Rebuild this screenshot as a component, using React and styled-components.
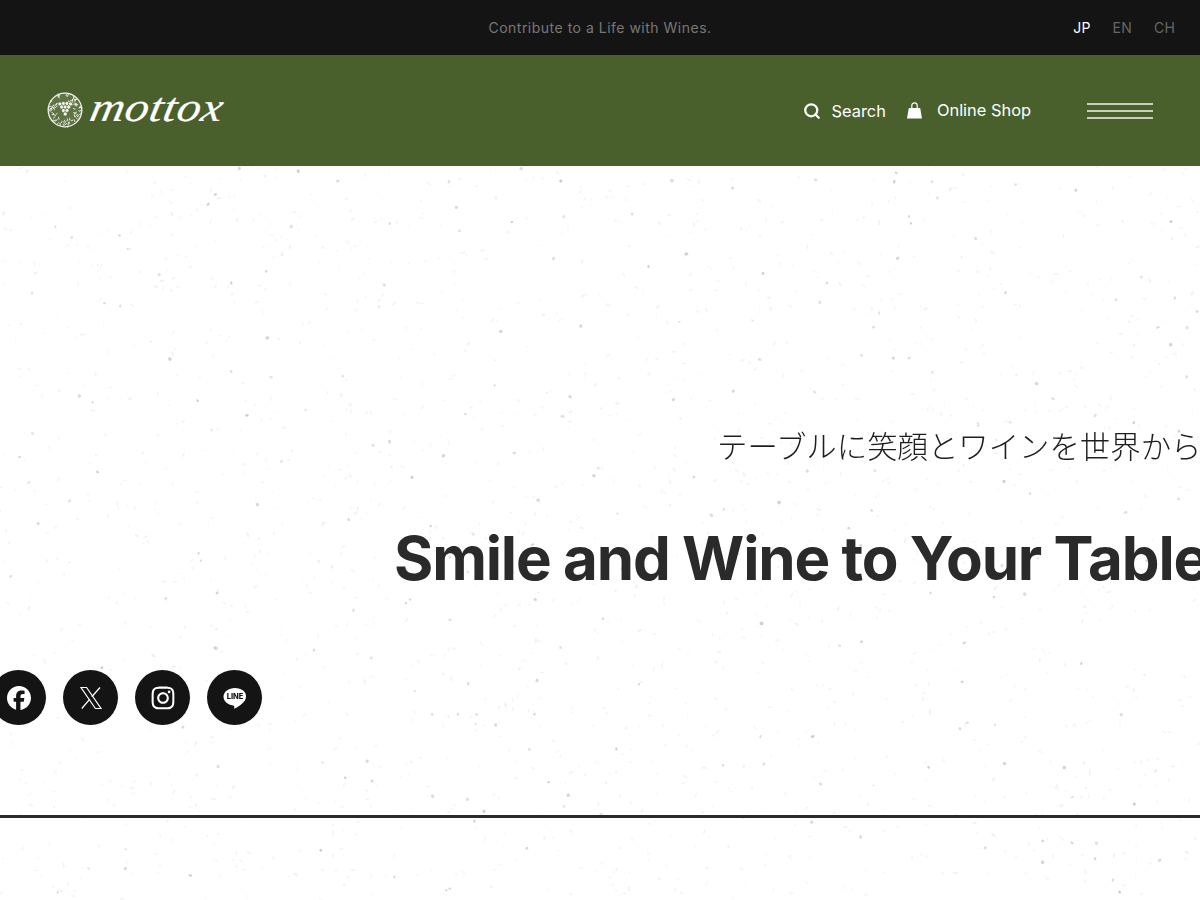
import React from 'react';
import styled, { createGlobalStyle } from 'styled-components';
import { Search } from 'lucide-react';
import { FaFacebook, FaInstagram } from 'react-icons/fa6';

const GlobalStyle = createGlobalStyle`
  html, body {
    margin: 0;
    padding: 0;
    height: 900px;
    overflow: hidden;
    background: #fff;
    font-family: Inter, "Noto Sans CJK JP", sans-serif;
  }
`;

const Page = styled.div`
  position: relative;
  width: 1200px;
  height: 900px;
  overflow: hidden;
`;

const TopBar = styled.div`
  height: 55px;
  background: #141414;
  display: grid;
  grid-template-columns: 1fr auto 1fr;
  align-items: center;
  padding: 0 25px;
`;

const Tagline = styled.div`
  grid-column: 2;
  font-size: 14px;
  letter-spacing: 0.5px;
  color: #787878;
`;

const Langs = styled.div`
  grid-column: 3;
  justify-self: end;
  display: flex;
  gap: 22px;
  font-size: 14px;
  letter-spacing: 0.2px;
`;

const Lang = styled.span`
  color: ${(p) => (p.$active ? '#fff' : '#666')};
`;

const Header = styled.header`
  height: 111px;
  background: #4a602c;
  display: flex;
  align-items: center;
  padding: 0 47px;
  color: #fff;
`;

const Logo = styled.div`
  display: flex;
  align-items: center;
  gap: 7px;
  margin-top: -2px;
`;

const LogoText = styled.span`
  font-family: "Liberation Serif", serif;
  font-style: italic;
  font-size: 41px;
  line-height: 36px;
  letter-spacing: 0.5px;
  -webkit-text-stroke: 0.2px #fff;
  transform: scaleX(1.16) skewX(-10deg);
  transform-origin: left center;
  margin-top: -6px;
  margin-left: 1px;
`;

const Nav = styled.nav`
  margin-left: auto;
  display: flex;
  align-items: center;
`;

const NavItem = styled.a`
  display: flex;
  align-items: center;
  gap: ${(p) => p.$gap}px;
  margin-right: ${(p) => p.$after}px;
  margin-top: ${(p) => p.$lift || 0}px;
  font-size: 16.4px;
  color: #fff;
`;

const Burger = styled.div`
  width: 66px;
  display: flex;
  flex-direction: column;
  gap: 5px;
`;

const BurgerLine = styled.span`
  height: 2px;
  background: #f2f2ee;
  transform: scaleY(0.75);
`;

const Hero = styled.section`
  position: relative;
  height: 652px;
  border-bottom: 3px solid #2a2a2a;
  box-sizing: border-box;
  padding-top: 259px;
`;

const Copy = styled.div`
  padding-left: 394px;
  white-space: nowrap;
`;

const Lead = styled.p`
  margin: 0 0 57px 323px;
  font-family: "Noto Sans CJK JP", sans-serif;
  font-weight: 300;
  font-size: 30.4px;
  line-height: 40px;
  color: #1e1e1e;
`;

const Headline = styled.h1`
  margin: 0;
  font-size: 60px;
  line-height: 72px;
  font-weight: 700;
  letter-spacing: -1.15px;
  word-spacing: -0.6px;
  color: #2a2a2a;
`;

const Socials = styled.div`
  display: flex;
  gap: 17px;
  margin: 76px 0 0 -9px;
`;

const SocialLink = styled.a`
  width: 55px;
  height: 55px;
  border-radius: 50%;
  background: #141414;
  color: #fff;
  display: flex;
  align-items: center;
  justify-content: center;
  font-size: ${(p) => p.$size}px;
`;

const Paper = styled.svg`
  position: absolute;
  left: 0;
  top: 166px;
  pointer-events: none;
`;

const Foreground = styled.div`
  position: relative;
  will-change: opacity;
`;

// seeded so the specks and the emblem stay put from one render to the next
function seeded(start) {
  let seed = start;
  return () => {
    seed = (seed * 1664525 + 1013904223) % 4294967296;
    return seed / 4294967296;
  };
}

function makeSpecks(count) {
  const rnd = seeded(20240611);
  return Array.from({ length: count }, () => {
    const big = rnd() > 0.9;
    return {
      x: rnd() * 1200,
      y: rnd() * 734,
      rx: big ? 1 + rnd() * 0.9 : 0.5 + rnd() * 0.8,
      ry: big ? 1 + rnd() * 0.9 : 0.6 + rnd() * 2.2,
      angle: rnd() * 180,
      o: big ? 0.14 + rnd() * 0.16 : 0.03 + rnd() * 0.05,
    };
  });
}

function makeEmblemStrokes(count) {
  const rnd = seeded(77);
  return Array.from({ length: count }, () => {
    const a = rnd() * Math.PI * 2;
    const r = 8 + rnd() * 7.5;
    const x = 18 + Math.cos(a) * r;
    const y = 18 + Math.sin(a) * r;
    const t = a + (rnd() - 0.5) * 2.4;
    const dx = Math.cos(t) * 2.6;
    const dy = Math.sin(t) * 2.6;
    return `M${x.toFixed(1)} ${y.toFixed(1)}q${(dy * 0.6).toFixed(1)} ${(dx * 0.6).toFixed(1)} ${dx.toFixed(1)} ${dy.toFixed(1)}`;
  });
}

const specks = makeSpecks(2200);
const emblemStrokes = makeEmblemStrokes(70);
const grapes = [[13, 12], [16.5, 11.5], [20, 11.5], [23.5, 12], [14.7, 15], [18.2, 15], [21.7, 15], [16.5, 18.5], [20, 18.5], [18.2, 22]];

const Emblem = () => (
  <svg width="36" height="36" viewBox="0 0 36 36" aria-hidden="true">
    <circle cx="18" cy="18" r="17.5" fill="#5f7344" />
    <circle cx="18" cy="18" r="16.8" fill="none" stroke="#f0f2ea" strokeWidth="1.3" />
    <path d={emblemStrokes.join('')} fill="none" stroke="#eef0e6" strokeWidth="1" />
    <g fill="#f4f5ee" stroke="#4a602c" strokeWidth="0.5">
      {grapes.map(([x, y]) => (
        <circle key={`${x}-${y}`} cx={x} cy={y} r="2" />
      ))}
    </g>
  </svg>
);

const BagIcon = () => (
  <svg width="15" height="17" viewBox="0 0 15 17" aria-hidden="true">
    <path d="M1.800 6h11.400L15 16.500H0z" fill="#fff" />
    <path d="M4.800 8V3.600C4.800 1.900 5.900.8 7.500.8s2.700 1.100 2.700 2.800V8" fill="none" stroke="#fff" strokeWidth="1.200" />
  </svg>
);

const XIcon = () => (
  <svg width="24" height="24" viewBox="0 0 24 24" aria-hidden="true" fill="none" stroke="#fff">
    <path d="M2 1.500h5.600L22 22.500h-5.600z" strokeWidth="1.200" />
    <path d="M21 1.500l-8.200 9.200M10.800 13.200L2.800 22.500" strokeWidth="1.300" />
  </svg>
);

const LineIcon = () => (
  <svg width="26" height="24" viewBox="0 0 26 24" aria-hidden="true">
    <path d="M13 2C6.600 2 1.500 5.900 1.500 10.800c0 4.400 4.100 8 9.600 8.700.4.100 1 .3 1.100.6.100.3.1.8 0 1.100 0 0-.2 1 0 1.200.3.3 1.200-.2 2-.7 2.200-1.300 9.800-5.400 9.800-11C24.500 5.900 19.400 2 13 2z" fill="#fff" />
    <text x="13" y="13.400" textAnchor="middle" fontFamily="Inter, sans-serif" fontWeight="800" fontSize="7.500" fill="#141414">LINE</text>
  </svg>
);

export default function App() {
  return (
    <Page>
      <GlobalStyle />
      <TopBar>
        <Tagline>Contribute to a Life with Wines.</Tagline>
        <Langs>
          <Lang $active>JP</Lang>
          <Lang>EN</Lang>
          <Lang>CH</Lang>
        </Langs>
      </TopBar>
      <Header>
        <Logo>
          <Emblem />
          <LogoText>mottox</LogoText>
        </Logo>
        <Nav>
          <NavItem $gap={11} $after={21}>
            <Search size={18} strokeWidth={3} />
            Search
          </NavItem>
          <NavItem $gap={15} $after={56} $lift={-1}>
            <BagIcon />
            Online Shop
          </NavItem>
          <Burger>
            <BurgerLine />
            <BurgerLine />
            <BurgerLine />
          </Burger>
        </Nav>
      </Header>
      <Paper width="1200" height="734" aria-hidden="true">
        {specks.map((s, i) => (
          <ellipse
            key={i}
            cx={s.x}
            cy={s.y}
            rx={s.rx}
            ry={s.ry}
            transform={`rotate(${s.angle} ${s.x} ${s.y})`}
            fill="#555"
            opacity={s.o}
          />
        ))}
      </Paper>
      <Foreground>
        <Hero>
          <Copy>
            <Lead>テーブルに笑顔とワインを世界から</Lead>
            <Headline>Smile and Wine to Your Table</Headline>
          </Copy>
          <Socials>
            <SocialLink $size={24}><FaFacebook /></SocialLink>
            <SocialLink><XIcon /></SocialLink>
            <SocialLink $size={26}><FaInstagram /></SocialLink>
            <SocialLink><LineIcon /></SocialLink>
          </Socials>
        </Hero>
      </Foreground>
    </Page>
  );
}
